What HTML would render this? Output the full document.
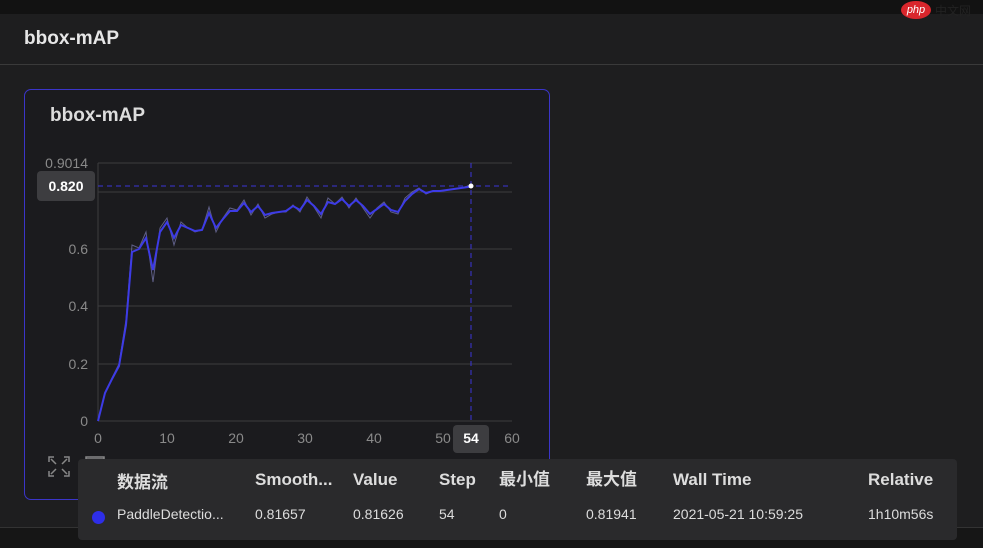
<!DOCTYPE html><html><head><meta charset="utf-8"><style>
body{margin:0;width:983px;height:547px;overflow:hidden;background:#1e1e1f;font-family:"Liberation Sans","Noto Sans CJK SC",sans-serif;position:relative;color:#ddd}
.top{position:absolute;left:0;top:0;width:983px;height:14px;background:#121212}
.h{position:absolute;left:24px;top:28px;font-size:19px;font-weight:bold;color:#e6e6e6}
.div{position:absolute;left:0;top:64px;width:983px;height:1px;background:#3a3a3a}
.card{position:absolute;left:24px;top:89px;width:526px;height:411px;border:1px solid #3b35c9;border-radius:7px;background:#1b1b1e;box-sizing:border-box}
.ct{position:absolute;left:50px;top:105px;font-size:19px;font-weight:bold;color:#ddd}
.bot{position:absolute;left:0;top:527px;width:983px;height:20px;background:#161616;border-top:1px solid #333}
.tip{position:absolute;left:78px;top:459px;width:879px;height:81px;background:#2a2a2c;border-radius:4px}
.tip span{position:absolute;font-size:14px;color:#ddd;white-space:nowrap;line-height:20px}
.tip b{position:absolute;font-size:17px;color:#ddd;white-space:nowrap;line-height:24px;top:9px}
.php{position:absolute;left:901px;top:1px;width:30px;height:18px;border-radius:50%;background:#d9262c;color:#fff;font-size:11px;font-style:italic;text-align:center;line-height:18px}
</style></head><body>
<div class="top"></div>
<div class="php">php</div><div style="position:absolute;left:935px;top:2px;font-size:12px;color:#222">中文网</div>
<div class="h">bbox-mAP</div>
<div class="div"></div>
<div class="bot"></div>
<div class="card"></div>
<div class="ct">bbox-mAP</div>
<svg style="position:absolute;left:0;top:0" width="983" height="547">
<g stroke="#3c3c3f" stroke-width="1">
<line x1="98" y1="163" x2="512" y2="163"/><line x1="98" y1="192" x2="512" y2="192"/><line x1="98" y1="249" x2="512" y2="249"/><line x1="98" y1="306" x2="512" y2="306"/><line x1="98" y1="364" x2="512" y2="364"/><line x1="98" y1="421" x2="512" y2="421"/>
<line x1="98" y1="163" x2="98" y2="421"/></g>
<g font-family="Liberation Sans" font-size="14" fill="#8a8a8a" text-anchor="end">
<text x="88" y="168">0.9014</text><text x="88" y="254">0.6</text><text x="88" y="311">0.4</text><text x="88" y="369">0.2</text><text x="88" y="426">0</text></g>
<g font-family="Liberation Sans" font-size="14" fill="#8a8a8a" text-anchor="middle">
<text x="98" y="443">0</text><text x="167" y="443">10</text><text x="236" y="443">20</text><text x="305" y="443">30</text><text x="374" y="443">40</text><text x="443" y="443">50</text><text x="512" y="443">60</text></g>
<line x1="98" y1="186" x2="512" y2="186" stroke="#3b35d8" stroke-dasharray="5,4"/>
<line x1="471" y1="163" x2="471" y2="421" stroke="#3b35d8" stroke-dasharray="5,4"/>
<polyline fill="none" stroke="#8c8ccc" stroke-width="1" opacity="0.6" points="98,421 105,393 112,378 119,364 126,320 132,245 139,248 146,232 153,282 160,228 167,218 174,245 181,222 188,228 195,232 202,230 209,207 216,232 223,218 230,208 237,210 244,200 251,215 258,204 265,218 272,214 279,212 286,212 293,205 300,212 307,197 314,207 321,218 328,198 335,204 342,197 349,208 356,198 363,208 370,218 377,208 384,202 391,212 398,214 405,198 412,192 419,188 426,194 433,191 440,191 447,190 454,189 461,188 468,186 471,186"/>
<polyline fill="none" stroke="#3d3be6" stroke-width="2" points="98,421 105,393 112,379 119,366 126,325 132,252 139,249 146,238 153,270 160,232 167,222 174,238 181,225 188,228 195,231 202,230 209,213 216,228 223,219 230,211 237,211 244,203 251,212 258,206 265,215 272,213 279,212 286,211 293,206 300,210 307,200 314,206 321,214 328,202 335,204 342,199 349,206 356,200 363,206 370,214 377,209 384,204 391,210 398,212 405,201 412,194 419,189 426,193 433,191 440,191 447,190 454,189 461,188 468,187 471,186"/>
<circle cx="471" cy="186" r="2.5" fill="#fff"/>
<rect x="37" y="171" width="58" height="30" rx="4" fill="#3d3d40"/>
<text x="66" y="191" font-family="Liberation Sans" font-size="14" font-weight="bold" fill="#fff" text-anchor="middle">0.820</text>
<rect x="453" y="425" width="36" height="28" rx="4" fill="#3d3d40"/>
<text x="471" y="443" font-family="Liberation Sans" font-size="14" font-weight="bold" fill="#fff" text-anchor="middle">54</text>
<g stroke="#888" stroke-width="1.5" fill="none"><path d="M49 462v-5h5M69 462v-5h-5M49 471v5h5M69 471v5h-5M51 459l5 5M67 459l-5 5M51 474l5-5M67 474l-5-5"/><rect x="86" y="457" width="18" height="2"/></g>
</svg>
<div class="tip">
<b style="left:39px;top:12px">数据流</b><b style="left:177px">Smooth...</b><b style="left:275px">Value</b><b style="left:361px">Step</b><b style="left:421px">最小值</b><b style="left:508px">最大值</b><b style="left:595px">Wall Time</b><b style="left:790px">Relative</b>
<div style="position:absolute;left:14px;top:52px;width:13px;height:13px;border-radius:50%;background:#2e2ee8"></div>
<span style="left:39px;top:45px">PaddleDetectio...</span><span style="left:177px;top:45px">0.81657</span><span style="left:275px;top:45px">0.81626</span><span style="left:361px;top:45px">54</span><span style="left:421px;top:45px">0</span><span style="left:508px;top:45px">0.81941</span><span style="left:595px;top:45px">2021-05-21 10:59:25</span><span style="left:790px;top:45px">1h10m56s</span>
</div>
</body></html>
